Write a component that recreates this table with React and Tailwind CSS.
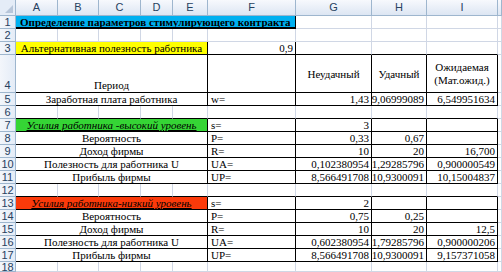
import React from 'react';

const serif = '[font-family:Liberation_Serif,serif]';

// one sheet cell: right / bottom edges are gridlines unless marked black
function Cell({ children, span = '', r, b, thick, bg = 'bg-white', cls = '' }) {
  const rc = r ? 'border-r-black' : 'border-r-[#d0d7e5]';
  const bw = thick ? 'border-b-2' : 'border-b';
  const bc = b || thick ? 'border-b-black' : 'border-b-[#d0d7e5]';
  return (
    <div className={`border-r ${bw} ${rc} ${bc} ${span} ${bg} ${cls} flex overflow-hidden whitespace-nowrap text-[11px] leading-[12px] text-black ${serif}`}>
      {children}
    </div>
  );
}

function RowNum({ n, end }) {
  return (
    <div className={`flex justify-center ${end ? 'items-end pb-[1px]' : 'items-center'} border-r border-b border-[#9eb6ce] bg-gradient-to-r from-[#f3f6fb] to-[#e4ecf7] text-[11px] leading-[12px] text-[#27415f] [font-family:Liberation_Sans,sans-serif]`}>
      {n}
    </div>
  );
}

function ColHead({ l }) {
  return (
    <div className="flex items-center justify-center border-r border-b border-[#9eb6ce] bg-gradient-to-b from-[#f7f9fd] to-[#dde6f3] text-[11px] text-[#27415f] [font-family:Liberation_Sans,sans-serif]">
      {l}
    </div>
  );
}

// empty row with gridlines, optional black bottom under the table columns
function EmptyRow({ n, under }) {
  return (
    <>
      <RowNum n={n} />
      {['A', 'B', 'C', 'D', 'E', 'F', 'G', 'H', 'I'].map((c) => (
        <Cell key={c} b={under} />
      ))}
      <Cell />
    </>
  );
}

function DataRow({ n, label, f, g, h, i, bg, head }) {
  return (
    <>
      <RowNum n={n} />
      <Cell span="col-span-5" r b bg={bg || 'bg-white'} cls="items-center justify-center">
        {head ? <span className="italic underline">{label}</span> : label}
      </Cell>
      <Cell r b cls="items-center pl-[3px]">{f}</Cell>
      <Cell r b cls="items-center justify-end pr-[2px]">{g}</Cell>
      <Cell r b cls="items-center justify-end pr-[2px]">{h}</Cell>
      <Cell r b cls="items-center justify-end pr-[2px]">{i}</Cell>
      <Cell />
    </>
  );
}

const high = [
  ['Усилия работника -высокий уровень', 's=', '3', '', '', 'bg-[#35d535]', true],
  ['Вероятность', 'P=', '0,33', '0,67', ''],
  ['Доход фирмы', 'R=', '10', '20', '16,700'],
  ['Полезность для работника U', 'UA=', '0,102380954', '1,29285796', '0,900000549'],
  ['Прибыль фирмы', 'UP=', '8,566491708', '10,9300091', '10,15004837'],
];

const low = [
  ['Усилия работника-низкий уровень', 's=', '2', '', '', 'bg-[#fb3a0a]', true],
  ['Вероятность', 'P=', '0,75', '0,25', ''],
  ['Доход фирмы', 'R=', '10', '20', '12,5'],
  ['Полезность для работника U', 'UA=', '0,602380954', '1,79285796', '0,900000206'],
  ['Прибыль фирмы', 'UP=', '8,566491708', '10,9300091', '9,157371058'],
];

export default function App() {
  return (
    <div className="w-[502px] h-[272px] overflow-hidden bg-white">
      <div className="grid grid-cols-[16px_42px_41px_42px_32px_35px_88px_76px_55px_71px_4px] grid-rows-[16px_13px_13px_13px_38px_repeat(13,13px)_10px]">
        {/* header */}
        <div className="relative border-r border-b border-[#9eb6ce] bg-[#e4ecf7]">
          <svg className="absolute right-[2px] bottom-[2px]" width="8" height="8" viewBox="0 0 8 8">
            <polygon points="8,0 8,8 0,8" fill="#b7c6da" />
          </svg>
        </div>
        {['A', 'B', 'C', 'D', 'E', 'F', 'G', 'H', 'I', ''].map((l, k) => (
          <ColHead key={k} l={l} />
        ))}

        {/* row 1 */}
        <RowNum n={1} />
        <Cell span="col-span-6" r thick bg="bg-[#00b0f0]" cls="items-center pl-[4px]">
          <span className="font-bold underline">Определение параметров стимулирующего контракта</span>
        </Cell>
        <Cell />
        <Cell />
        <Cell />
        <Cell />

        {/* row 2 */}
        <EmptyRow n={2} />

        {/* row 3 */}
        <RowNum n={3} />
        <Cell span="col-span-5" r b bg="bg-[#ffff00]" cls="items-center justify-center">
          Альтернативная полезность работника
        </Cell>
        <Cell r b cls="items-center justify-end pr-[2px]">0,9</Cell>
        <Cell b />
        <Cell b />
        <Cell b />
        <Cell />

        {/* row 4 */}
        <RowNum n={4} end />
        <Cell span="col-span-5" r b cls="items-end justify-center pb-[1px]">Период</Cell>
        <Cell r b />
        <Cell r b cls="items-center justify-center">Неудачный</Cell>
        <Cell r b cls="items-center justify-center">Удачный</Cell>
        <Cell r b cls="flex-col items-center justify-center leading-[13px]">
          <span>Ожидаемая</span>
          <span>(Мат.ожид.)</span>
        </Cell>
        <Cell />

        {/* row 5 */}
        <DataRow n={5} label="Заработная плата работника" f="w=" g="1,43" h="9,06999089" i="6,549951634" />

        <EmptyRow n={6} under />

        {high.map((r, k) => (
          <DataRow key={k} n={7 + k} label={r[0]} f={r[1]} g={r[2]} h={r[3]} i={r[4]} bg={r[5]} head={r[6]} />
        ))}

        <EmptyRow n={12} under />

        {low.map((r, k) => (
          <DataRow key={k} n={13 + k} label={r[0]} f={r[1]} g={r[2]} h={r[3]} i={r[4]} bg={r[5]} head={r[6]} />
        ))}

        <EmptyRow n={18} />
      </div>
    </div>
  );
}
